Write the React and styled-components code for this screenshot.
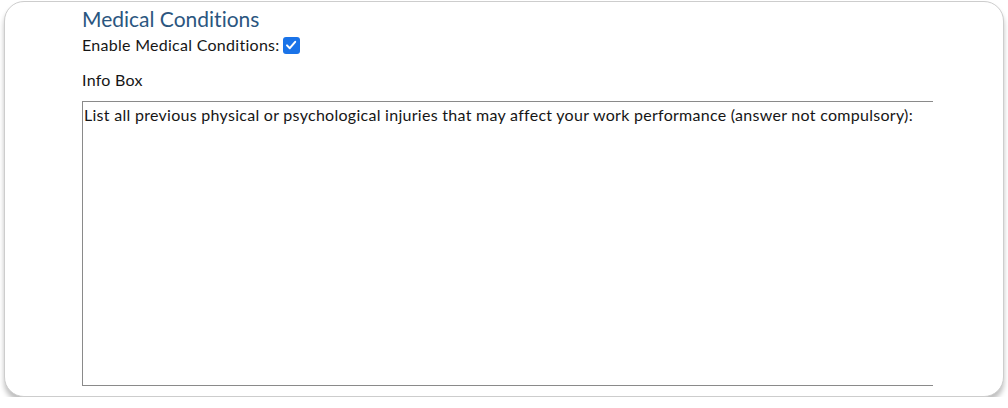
import React from 'react';
import styled, { createGlobalStyle } from 'styled-components';

const GlobalStyle = createGlobalStyle`
  html, body {
    margin: 0;
    padding: 0;
    background: #fff;
  }
  body {
    font-family: Lato, "Open Sans", sans-serif;
    color: #161616;
    font-variant-ligatures: none;
  }
`;

const Page = styled.div`
  padding: 1px 4px 0 4px;
  width: 1008px;
  box-sizing: border-box;
`;

const Card = styled.section`
  height: 396px;
  box-sizing: border-box;
  border: 1px solid #cdcdcd;
  border-radius: 20px;
  background: #fff;
  box-shadow: 0 5px 5px rgba(0, 0, 0, 0.25);
  padding: 4px 0 0 77px;
`;

const Body = styled.div`
  width: 851px;
  overflow: hidden;
`;

const Title = styled.h2`
  margin: 0;
  font-size: 21px;
  font-weight: 400;
  line-height: 26px;
  color: #2b5680;
`;

const CheckRow = styled.label`
  display: flex;
  align-items: center;
  gap: 3px;
  margin-top: 3px;
  font-size: 16px;
  line-height: 20px;
  letter-spacing: 0.28px;
`;

const Check = styled.span`
  width: 17px;
  height: 17px;
  border-radius: 3px;
  background: #1a73e8;
  display: inline-flex;
  align-items: center;
  justify-content: center;
`;

const FieldLabel = styled.div`
  margin-top: 15px;
  font-size: 16px;
  line-height: 20px;
  letter-spacing: 0.28px;
`;

const InfoArea = styled.textarea`
  display: block;
  margin-top: 11px;
  width: 900px;
  height: 285px;
  box-sizing: border-box;
  border: 1px solid #8a8a8a;
  border-right: none;
  padding: 3px 1px;
  font-family: Lato, "Open Sans", sans-serif;
  font-variant-ligatures: none;
  font-size: 16px;
  line-height: 20px;
  letter-spacing: 0.28px;
  color: #161616;
  resize: none;
  outline: none;
  background: #fff;
`;

export default function App() {
  return (
    <Page>
      <GlobalStyle />
      <Card>
        <Body>
          <Title>Medical Conditions</Title>
          <CheckRow>
            Enable Medical Conditions:
            <Check>
              <svg width="12" height="12" viewBox="0 0 12 12">
                <path d="M2 6.4 L4.8 9.2 L10.2 2.8" fill="none" stroke="#fff" strokeWidth="2" strokeLinecap="round" strokeLinejoin="round" />
              </svg>
            </Check>
          </CheckRow>
          <FieldLabel>Info Box</FieldLabel>
          <InfoArea
            readOnly
            defaultValue="List all previous physical or psychological injuries that may affect your work performance (answer not compulsory):"
          />
        </Body>
      </Card>
    </Page>
  );
}
